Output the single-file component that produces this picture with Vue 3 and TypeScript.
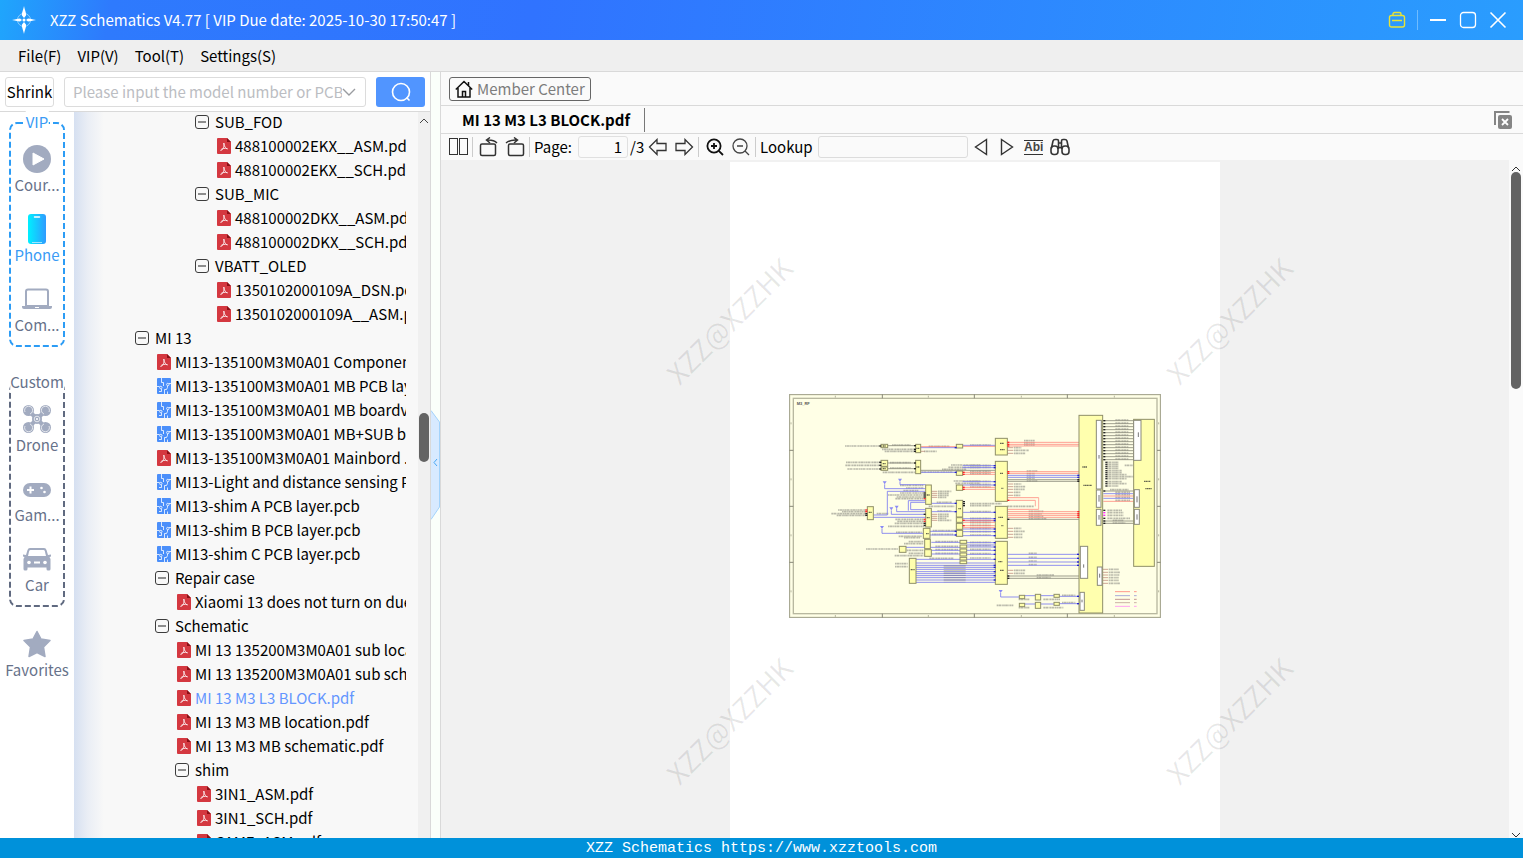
<script setup lang="ts">
import { ref } from 'vue'

type Kind = 'folder' | 'pdf' | 'pcb'
interface TreeRow { level: number; kind: Kind; name: string }

const menus: string[] = ['File(F)', 'VIP(V)', 'Tool(T)', 'Settings(S)']

const rows: TreeRow[] = [
  { level: 3, kind: 'folder', name: 'SUB_FOD' },
  { level: 4, kind: 'pdf', name: '488100002EKX__ASM.pdf' },
  { level: 4, kind: 'pdf', name: '488100002EKX__SCH.pdf' },
  { level: 3, kind: 'folder', name: 'SUB_MIC' },
  { level: 4, kind: 'pdf', name: '488100002DKX__ASM.pdf' },
  { level: 4, kind: 'pdf', name: '488100002DKX__SCH.pdf' },
  { level: 3, kind: 'folder', name: 'VBATT_OLED' },
  { level: 4, kind: 'pdf', name: '1350102000109A_DSN.pdf' },
  { level: 4, kind: 'pdf', name: '1350102000109A__ASM.pdf' },
  { level: 0, kind: 'folder', name: 'MI 13' },
  { level: 1, kind: 'pdf', name: 'MI13-135100M3M0A01 Component.pdf' },
  { level: 1, kind: 'pcb', name: 'MI13-135100M3M0A01 MB PCB layer.pcb' },
  { level: 1, kind: 'pcb', name: 'MI13-135100M3M0A01 MB boardview.pcb' },
  { level: 1, kind: 'pcb', name: 'MI13-135100M3M0A01 MB+SUB board.pcb' },
  { level: 1, kind: 'pdf', name: 'MI13-135100M3M0A01 Mainbord .pdf' },
  { level: 1, kind: 'pcb', name: 'MI13-Light and distance sensing PCB.pcb' },
  { level: 1, kind: 'pcb', name: 'MI13-shim A PCB layer.pcb' },
  { level: 1, kind: 'pcb', name: 'MI13-shim B PCB layer.pcb' },
  { level: 1, kind: 'pcb', name: 'MI13-shim C PCB layer.pcb' },
  { level: 1, kind: 'folder', name: 'Repair case' },
  { level: 2, kind: 'pdf', name: 'Xiaomi 13 does not turn on due.pdf' },
  { level: 1, kind: 'folder', name: 'Schematic' },
  { level: 2, kind: 'pdf', name: 'MI 13 135200M3M0A01 sub location.pdf' },
  { level: 2, kind: 'pdf', name: 'MI 13 135200M3M0A01 sub schematic.pdf' },
  { level: 2, kind: 'pdf', name: 'MI 13 M3 L3 BLOCK.pdf' },
  { level: 2, kind: 'pdf', name: 'MI 13 M3 MB location.pdf' },
  { level: 2, kind: 'pdf', name: 'MI 13 M3 MB schematic.pdf' },
  { level: 2, kind: 'folder', name: 'shim' },
  { level: 3, kind: 'pdf', name: '3IN1_ASM.pdf' },
  { level: 3, kind: 'pdf', name: '3IN1_SCH.pdf' },
  { level: 3, kind: 'pdf', name: 'CAME_ASM.pdf' },
]

const selected = ref<string>('MI 13 M3 L3 BLOCK.pdf')
const query = ref<string>('')
const page = ref<string>('1')
const lookup = ref<string>('')

/* ---- block diagram geometry, in sheet units ---- */
type Box = [x: number, y: number, w: number, h: number]
type Seg = [x1: number, x2: number, y: number]

const chips: Box[] = [
  [303, 178, 20, 10], [407, 178, 15, 25], [529, 178, 19, 11], [303, 226, 20, 18], [303, 246, 20, 10],
  [407, 226, 15, 40], [529, 258, 19, 13], [437, 300, 17, 58], [529, 300, 19, 16], [262, 365, 18, 39],
  [437, 370, 17, 56], [529, 346, 19, 50], [529, 398, 19, 14], [529, 415, 19, 18], [529, 436, 19, 18],
  [430, 430, 20, 30], [434, 463, 17, 28], [434, 494, 20, 20], [358, 484, 20, 18], [540, 466, 20, 9],
  [540, 480, 20, 9], [540, 492, 20, 9], [540, 504, 20, 9], [540, 517, 20, 8], [540, 528, 20, 8],
  [388, 520, 20, 75],
  [646, 160, 36, 50], [646, 229, 36, 120], [646, 364, 36, 96], [646, 469, 36, 129],
  [897, 91, 71, 593], [1061, 103, 62, 441],
  [718, 631, 16, 10], [766, 628, 16, 17], [822, 628, 16, 9],
  [718, 655, 16, 10], [766, 652, 16, 18], [822, 652, 16, 9],
]
const ports: Box[] = [
  [949, 106, 15, 206], [1061, 106, 22, 120], [949, 315, 14, 52], [949, 373, 14, 48], [1063, 314, 15, 53],
  [1063, 373, 15, 45], [901, 484, 22, 96], [952, 546, 14, 55], [900, 622, 13, 54],
]
const blue: Seg[] = [
  [422, 529, 188], [422, 529, 262], [548, 646, 181], [548, 646, 242], [548, 646, 248], [548, 646, 290],
  [548, 646, 300], [454, 529, 355], [454, 529, 380], [548, 646, 382], [548, 646, 401], [548, 646, 407],
  [280, 437, 397], [314, 437, 311], [360, 437, 299], [322, 437, 319], [334, 437, 388], [350, 437, 380],
  [385, 437, 347], [392, 437, 352], [306, 430, 445], [450, 529, 439], [450, 529, 450], [548, 646, 432],
  [548, 646, 440], [548, 646, 452], [378, 540, 487], [454, 540, 472], [454, 540, 496], [454, 540, 507],
  [560, 646, 473], [560, 646, 480], [560, 646, 486], [560, 646, 496], [560, 646, 508], [408, 646, 523],
  [408, 646, 534], [408, 646, 541], [408, 646, 547], [408, 646, 553], [408, 646, 560], [408, 646, 566],
  [408, 646, 572], [408, 646, 578], [408, 646, 585], [408, 646, 592],
  [682, 897, 271], [682, 897, 277], [682, 901, 508], [682, 901, 520], [682, 901, 531], [682, 901, 541],
  [662, 718, 636], [734, 822, 632], [838, 900, 634], [734, 822, 657], [838, 900, 656], [970, 1063, 326],
  [970, 1063, 340],
]
const red: Seg[] = [
  [422, 529, 185], [548, 646, 184], [548, 646, 262], [548, 646, 268], [548, 646, 307], [548, 646, 313],
  [548, 646, 406], [548, 646, 412], [548, 646, 422], [548, 646, 428], [682, 897, 172], [682, 897, 178],
  [682, 897, 183], [682, 897, 260], [682, 897, 265], [682, 897, 380], [682, 897, 386], [682, 897, 391],
  [682, 897, 397], [682, 776, 338], [682, 766, 346], [682, 776, 373], [970, 1063, 333], [970, 1063, 349],
]
const black: Seg[] = [
  [323, 407, 182], [323, 407, 234], [323, 407, 251], [422, 646, 256], [682, 897, 284], [682, 897, 289],
  [682, 897, 403], [682, 901, 573], [682, 901, 580], [970, 1063, 318], [970, 1063, 408], [970, 1063, 415],
  ...Array.from({ length: 14 }, (_, i): Seg => [970, 1063, 107 + i * 9]),
]
const labels: Seg[] = [
  [195, 300, 183], [336, 392, 180], [306, 405, 193], [314, 405, 199], [446, 508, 184], [432, 470, 199],
  [198, 300, 232], [196, 300, 241], [202, 300, 252], [330, 392, 233], [330, 392, 249], [308, 405, 262],
  [513, 600, 240], [505, 600, 247], [486, 560, 253], [424, 520, 261], [521, 600, 288], [526, 600, 295],
  [360, 430, 301], [378, 430, 309], [370, 416, 317], [360, 434, 324], [324, 434, 330], [350, 434, 336],
  [346, 434, 341], [474, 514, 319], [474, 506, 325], [474, 506, 331], [474, 500, 337], [470, 516, 352],
  [446, 524, 364], [174, 258, 375], [186, 258, 380], [154, 258, 386], [170, 258, 391], [290, 326, 386],
  [472, 514, 378], [474, 506, 388], [474, 506, 394], [474, 500, 400], [474, 514, 406], [346, 434, 403],
  [352, 434, 409], [344, 434, 415], [324, 434, 424], [348, 425, 442], [356, 425, 454], [372, 420, 458],
  [386, 430, 470], [372, 430, 476], [258, 354, 492], [380, 430, 496], [386, 430, 505], [344, 430, 512],
  [345, 384, 536], [345, 384, 545], [466, 534, 470], [466, 534, 484], [466, 534, 494], [466, 534, 505],
  [448, 520, 520], [458, 530, 437], [456, 520, 448], [570, 632, 180], [570, 632, 241], [570, 632, 247],
  [570, 632, 259], [570, 632, 266], [570, 632, 289], [570, 632, 298], [570, 632, 306], [570, 665, 356],
  [570, 632, 362], [570, 632, 380], [570, 632, 400], [570, 632, 407], [570, 632, 413], [570, 632, 421],
  [570, 632, 430], [570, 632, 440], [570, 632, 450], [570, 632, 472], [570, 632, 482], [570, 632, 493],
  [570, 632, 506], [570, 632, 519], [732, 764, 167], [732, 764, 174], [732, 764, 180], [702, 724, 188],
  [702, 746, 196], [702, 736, 205], [740, 772, 258], [740, 764, 266], [740, 764, 273], [740, 764, 280],
  [740, 772, 288], [702, 724, 297], [702, 736, 305], [702, 734, 313], [702, 722, 322], [702, 722, 331],
  [682, 762, 364], [746, 790, 379], [746, 786, 387], [746, 790, 394], [746, 800, 401], [702, 724, 430],
  [702, 734, 439], [702, 728, 448], [702, 728, 457], [746, 770, 505], [746, 770, 517], [746, 770, 528],
  [746, 770, 539], [702, 736, 556], [702, 734, 565], [770, 822, 570], [770, 812, 578], [846, 886, 631],
  [846, 886, 653], [716, 748, 643], [790, 840, 643], [650, 700, 661], [716, 748, 668], [790, 850, 668],
  ...Array.from({ length: 14 }, (_, i): Seg => [1006, 1046, 105 + i * 9]),
  [980, 1016, 232], [980, 1016, 238], [980, 1016, 244], [980, 1016, 250], [1034, 1058, 241],
  [980, 1026, 257], [980, 1026, 263], [980, 1040, 269], [980, 1068, 275], [980, 1040, 281],
  [980, 1026, 290], [980, 1040, 296], [980, 1016, 303], [990, 1046, 314], [1006, 1050, 322],
  [1006, 1050, 329], [1006, 1050, 337], [1006, 1050, 346], [982, 1026, 376], [982, 1030, 383],
  [982, 1030, 391], [982, 1050, 400], [998, 1030, 406], [998, 1036, 414], [986, 1016, 553],
  [986, 1020, 562], [986, 1018, 570], [986, 1016, 578], [986, 1016, 586], [986, 1020, 595],
  [911, 936, 301], [1092, 1112, 289], [1096, 1116, 311],
]
const stubs: Seg[] = [
  [422, 434, 199], [454, 472, 319], [454, 472, 325], [454, 472, 331], [454, 472, 337], [454, 472, 388],
  [454, 472, 394], [454, 472, 400], [454, 472, 406], [682, 700, 188], [682, 700, 196], [682, 700, 205],
  [682, 700, 297], [682, 700, 305], [682, 700, 313], [682, 700, 322], [682, 700, 331], [682, 700, 430],
  [682, 700, 439], [682, 700, 448], [682, 700, 457], [682, 700, 556], [682, 700, 565], [968, 984, 553],
  [968, 984, 562], [968, 984, 570], [968, 984, 578], [968, 984, 586], [968, 984, 595],
]
const pins: [x: number, y: number, color: string][] = [
  ...[182, 193, 199, 234, 251].map((y): [number, number, string] => [405, y, '#222']),
  ...[183, 232, 241, 252].map((y): [number, number, string] => [301, y, '#222']),
  ...[324, 330, 336, 388, 415, 421].map((y): [number, number, string] => [434, y, '#222']),
  ...[403, 409, 341].map((y): [number, number, string] => [434, y, '#f33']),
  ...[188, 262, 355, 380, 439, 450].map((y): [number, number, string] => [527, y, '#22c']),
  ...[262, 268, 307, 313, 406, 422].map((y): [number, number, string] => [551, y, '#f22']),
  ...[350, 356, 362].map((y): [number, number, string] => [552, y, '#222']),
  ...[242, 248, 290, 300, 382, 401, 407, 432, 440, 452, 473, 486, 496, 508, 523, 541, 547, 560, 572, 585].map((y): [number, number, string] => [644, y, '#22c']),
  ...[172, 178, 183, 260, 265, 346].map((y): [number, number, string] => [685, y, '#f22']),
  ...[380, 386, 391, 397].map((y): [number, number, string] => [895, y, '#f22']),
  ...[271, 277].map((y): [number, number, string] => [895, y, '#22c']),
  ...[284, 289].map((y): [number, number, string] => [895, y, '#222']),
  ...[508, 520, 531, 541, 634, 656].map((y): [number, number, string] => [894, y, '#22c']),
  ...[403, 573, 580].map((y): [number, number, string] => [685, y, '#222']),
  ...[375, 380].map((y): [number, number, string] => [259, y, '#f22']),
  ...[386, 391].map((y): [number, number, string] => [259, y, '#222']),
  ...Array.from({ length: 14 }, (_, i): [number, number, string] => [973, 107 + i * 9, '#222']),
  ...[232, 238, 244, 250, 257, 263, 269, 275, 281, 290, 296, 303].map((y): [number, number, string] => [979, y, '#333']),
  ...[318, 376, 400, 408, 415].map((y): [number, number, string] => [973, y, '#222']),
  ...[383, 391].map((y): [number, number, string] => [973, y, '#f2f']),
]
const power: [number, number][] = [[314, 294], [360, 286], [334, 372], [350, 367], [306, 428], [662, 620]]
const legend: [number, string][] = [[620, '#f33'], [632, '#55c'], [643, '#834'], [653, '#966'], [664, '#f4f']]
</script>

<template>
  <div class="app">
    <header class="titlebar">
      <svg class="logo" viewBox="0 0 24 28">
        <circle cx="12" cy="14" r="6.500" fill="none" stroke="#8fd0ff" stroke-width="1" />
        <path d="M12 0C13 5 14.500 7 14 9.500L12 12L10 9.500C9.500 7 11 5 12 0ZM12 28C13 23 14.500 21 14 18.500L12 16L10 18.500C9.500 21 11 23 12 28ZM0 14C4 13.500 6 12.500 8 12.500L10 14L8 15.500C6 15.500 4 14.500 0 14ZM24 14C20 13.500 18 12.500 16 12.500L14 14L16 15.500C18 15.500 20 14.500 24 14Z" fill="#fff" />
        <circle cx="12" cy="14" r="1.500" fill="#fff" />
      </svg>
      <h1 class="title">XZZ Schematics V4.77 [ VIP Due date: 2025-10-30 17:50:47 ]</h1>
      <div class="win-tools">
        <button class="win" aria-label="Toolbox">
          <svg viewBox="0 0 18 18" width="18" height="18" fill="none" stroke="#e8e337" stroke-width="1.400"><rect x="1.500" y="4.500" width="15" height="11.500" rx="2" /><path d="M5 4.500V3Q5 1.500 6.500 1.500H11.500Q13 1.500 13 3V4.500M4 9.500H14" /></svg>
        </button>
        <span class="win-sep"></span>
        <button class="win" aria-label="Minimize">
          <svg viewBox="0 0 18 18" width="18" height="18"><path d="M1 9H17" stroke="#fff" stroke-width="2" /></svg>
        </button>
        <button class="win" aria-label="Maximize">
          <svg viewBox="0 0 18 18" width="18" height="18"><rect x="1.500" y="1.500" width="15" height="15" rx="3" fill="none" stroke="#fff" stroke-width="1.300" /></svg>
        </button>
        <button class="win" aria-label="Close">
          <svg viewBox="0 0 18 18" width="18" height="18"><path d="M1.500 1.500L16.500 16.500M16.500 1.500L1.500 16.500" stroke="#fff" stroke-width="1.600" /></svg>
        </button>
      </div>
    </header>

    <nav class="menubar">
      <button v-for="m in menus" :key="m">{{ m }}</button>
    </nav>

    <main class="body">
      <section class="left">
        <form class="search" @submit.prevent>
          <button type="button" class="shrink">Shrink</button>
          <div class="combo">
            <input v-model="query" type="text" aria-label="Model number" placeholder="Please input the model number or PCB" />
            <svg viewBox="0 0 14 8" width="14" height="8"><path d="M1 1L7 7L13 1" fill="none" stroke="#9a9ca0" stroke-width="1.400" /></svg>
          </div>
          <button type="submit" class="go" aria-label="Search">
            <svg viewBox="0 0 20 20" width="20" height="20" fill="none" stroke="#fff" stroke-width="1.600"><circle cx="10" cy="10" r="8.500" /><path d="M15.500 15.500L18.500 18.500" /></svg>
          </button>
        </form>

        <div class="left-main">
          <aside class="side">
            <div class="group vip">
              <svg class="dash"><rect x="1" y="1" rx="7" /></svg>
              <span class="caption">VIP</span>
              <button class="cat">
                <svg viewBox="0 0 28 28"><circle cx="14" cy="14" r="14" fill="#a2abc0" /><path d="M10 8L21 14L10 20Z" fill="#fff" stroke="#fff" stroke-linejoin="round" /></svg>
                <span>Cour...</span>
              </button>
              <button class="cat on">
                <svg viewBox="0 0 28 30">
                  <defs><linearGradient id="phone" x1="0" x2="1"><stop offset="0" stop-color="#00f0ff" /><stop offset="1" stop-color="#2f9bff" /></linearGradient></defs>
                  <rect x="5" y="0" width="18" height="30" rx="3" fill="url(#phone)" /><path d="M11.500 3H16.500" stroke="#fff" stroke-width="1.500" stroke-linecap="round" /><path d="M9 28.500H19" stroke="#9fe6ff" />
                </svg>
                <span>Phone</span>
              </button>
              <button class="cat">
                <svg viewBox="0 0 30 30"><path d="M4 7.500Q4 5.500 6 5.500H24Q26 5.500 26 7.500V22H4Z" fill="#fff" stroke="#a2abc0" stroke-width="2" /><path d="M0 22H30V23Q30 25 28 25H2Q0 25 0 23Z" fill="#a2abc0" /><path d="M13 23.500H17" stroke="#fff" /></svg>
                <span>Com...</span>
              </button>
            </div>

            <div class="group custom">
              <svg class="dash"><rect x="1" y="1" rx="7" /></svg>
              <span class="caption">Custom</span>
              <button class="cat">
                <svg viewBox="0 0 28 28">
                  <path d="M6 6L14 14M22 6L14 14M6 22L14 14M22 22L14 14" stroke="#a2abc0" stroke-width="4" /><circle cx="14" cy="14" r="5" fill="#a2abc0" />
                  <g fill="#a2abc0"><circle cx="5.500" cy="5.500" r="5.500" /><circle cx="22.500" cy="5.500" r="5.500" /><circle cx="5.500" cy="22.500" r="5.500" /><circle cx="22.500" cy="22.500" r="5.500" /></g>
                  <g fill="none" stroke="#fff" stroke-width="0.700"><path d="M2 7A4 4 0 1 1 7 9M26 7A4 4 0 1 0 21 9M2 21A4 4 0 1 0 7 19M26 21A4 4 0 1 1 21 19" /><circle cx="14" cy="14" r="2.800" /></g>
                  <circle cx="14" cy="14" r="1.100" fill="#fff" />
                </svg>
                <span>Drone</span>
              </button>
              <button class="cat">
                <svg viewBox="0 0 28 28"><rect y="8" width="28" height="14" rx="7" fill="#a2abc0" /><path d="M7.500 11.500V18.500M4 15H11" stroke="#fff" stroke-width="2" /><circle cx="18.500" cy="13" r="1.300" fill="#fff" /><circle cx="21.500" cy="17" r="1.300" fill="#fff" /></svg>
                <span>Gam...</span>
              </button>
              <button class="cat">
                <svg viewBox="0 0 28 28"><path d="M7 3H21Q23 3 23.500 5L25 10L28 9.500V11.500L26.500 12L27.500 14V24Q27.500 25.500 26 25.500H25Q23.500 25.500 23.500 24V22.500H4.500V24Q4.500 25.500 3 25.500H2Q0.500 25.500 0.500 24V14L1.500 12L0 11.500V9.500L3 10L4.500 5Q5 3 7 3Z" fill="#a2abc0" /><path d="M7.500 5H20.500Q21.500 5 21.800 6L23 11H5L6.200 6Q6.500 5 7.500 5Z" fill="#fff" /><circle cx="6" cy="17.500" r="1.800" fill="#fff" /><circle cx="22" cy="17.500" r="1.800" fill="#fff" /><path d="M11 17.500H17" stroke="#fff" stroke-width="2" /></svg>
                <span>Car</span>
              </button>
            </div>

            <button class="cat fav">
              <svg viewBox="0 0 28 28"><path d="M14 1.500L18 9L27 10.500L20.500 17L22 26.500L14 22.500L6 26.500L7.500 17L1 10.500L10 9Z" fill="#a2abc0" stroke="#a2abc0" stroke-width="1.500" stroke-linejoin="round" /></svg>
              <span>Favorites</span>
            </button>
          </aside>

          <div class="tree-wrap">
            <ul class="tree">
              <li v-for="r in rows" :key="r.name" :style="{ paddingLeft: 61 + r.level * 20 + 'px' }">
                <button class="node" :class="{ current: r.name === selected }" @click="selected = r.name">
                  <svg v-if="r.kind === 'folder'" class="expander" viewBox="0 0 14 14"><rect x="0.500" y="0.500" width="13" height="13" rx="2.500" fill="none" stroke="#3c3c3c" /><path d="M3 7H11" stroke="#222" /></svg>
                  <svg v-else-if="r.kind === 'pdf'" class="file" viewBox="0 0 14 16"><path d="M1 0H10L14 4V15Q14 16 13 16H1Q0 16 0 15V1Q0 0 1 0Z" fill="#d43840" /><path d="M10 0L14 4H10Z" fill="#8a1016" /><path d="M6.800 5C7.200 8 7 8.500 6 10.500C5 12.300 3.500 13 3.700 12C4 11 8 9.600 10.500 10.800C9 10.800 7 8.500 6.800 5Z" fill="none" stroke="#fff" stroke-width="0.800" /></svg>
                  <svg v-else class="file" viewBox="0 0 14 16"><rect width="14" height="16" rx="1" fill="#4b8ffa" /><g fill="none" stroke="#fff" stroke-width="0.800"><path d="M4.500 0V4.500H6.500V8M0 8.500H2.500M7.500 16V11.500H9.500L10.500 9.500V8M10.500 16V13.500M14 5.500H12M2 13.500H4.500V11" /><circle cx="10.800" cy="6.500" r="1.200" /><circle cx="3.800" cy="9.500" r="1.200" /></g></svg>
                  <span>{{ r.name }}</span>
                </button>
              </li>
            </ul>
            <div class="vbar tree-bar">
              <svg viewBox="0 0 10 6" width="10" height="6"><path d="M1 5L5 1L9 5" fill="none" stroke="#444" /></svg>
              <span class="thumb"></span>
            </div>
          </div>
        </div>
      </section>

      <div class="splitter">
        <button class="handle" aria-label="Collapse panel">
          <svg viewBox="0 0 9 110" width="9" height="110"><path d="M0 0.500L8.500 12V97L0 109.500" fill="#d8eaff" stroke="#a3d3fb" /><path d="M6 49L3 52.500L6 56" fill="none" stroke="#4aa8f5" /></svg>
        </button>
      </div>

      <section class="right">
        <div class="memberbar">
          <button class="member">
            <svg viewBox="0 0 18 18" width="18" height="18" fill="none" stroke="#111" stroke-width="1.500"><path d="M0.800 9.500L9 1.500L17.200 9.500M3 8V17H15V8M7.500 17V11.500H10.500V17M13.500 2V5.500" /></svg>
            Member Center
          </button>
        </div>
        <div class="tabbar">
          <button class="tab">MI 13 M3 L3 BLOCK.pdf</button>
          <button class="close-all" aria-label="Close all tabs">
            <svg viewBox="0 0 18 18" width="18" height="18"><path d="M1 14V1H15.500" fill="none" stroke="#858585" stroke-width="2" /><rect x="4" y="4" width="14" height="14" rx="2" fill="#858585" /><path d="M8 8L14 14M14 8L8 14" stroke="#fff" stroke-width="1.800" /></svg>
          </button>
        </div>
        <div class="toolbar">
          <button class="ico panes" aria-label="Two pages">
            <svg viewBox="0 0 20 18" width="20" height="18" fill="none" stroke="#333"><rect x="0.500" y="0.500" width="8" height="16" /><rect x="10.500" y="0.500" width="8" height="16" /></svg>
          </button>
          <span class="sep"></span>
          <button class="ico rotate" aria-label="Rotate left">
            <svg viewBox="0 0 20 20" width="20" height="20" fill="none" stroke="#333" stroke-width="1.500"><rect x="1.500" y="7" width="15" height="11.500" rx="1.500" /><path d="M18 6Q14.500 2.500 8 3M11 0.500L7.500 3L11 6" /></svg>
          </button>
          <button class="ico rotate" aria-label="Rotate right">
            <svg viewBox="0 0 20 20" width="20" height="20" fill="none" stroke="#333" stroke-width="1.500"><rect x="3.500" y="7" width="15" height="11.500" rx="1.500" /><path d="M1 6Q5 2.500 12 3M9 0.500L12.500 3L9 6" /></svg>
          </button>
          <span class="sep"></span>
          <label class="lbl-page" for="page">Page:</label>
          <input id="page" v-model="page" class="page-no" type="text" />
          <span class="total">/3</span>
          <button class="ico arrow" aria-label="Previous page">
            <svg viewBox="0 0 20 18" width="20" height="18" fill="none" stroke="#333" stroke-width="1.300"><path d="M1.500 9L9 1.500V5.500H18V12.500H9V16.500Z" /></svg>
          </button>
          <button class="ico arrow" aria-label="Next page">
            <svg viewBox="0 0 20 18" width="20" height="18" fill="none" stroke="#333" stroke-width="1.300"><path d="M18.500 9L11 1.500V5.500H2V12.500H11V16.500Z" /></svg>
          </button>
          <span class="sep"></span>
          <button class="ico zoom" aria-label="Zoom in">
            <svg viewBox="0 0 18 18" width="18" height="18" fill="none" stroke="#111" stroke-width="1.800"><circle cx="8" cy="8" r="6.600" /><path d="M12.800 12.800L17 17M5 8H11M8 5V11" /></svg>
          </button>
          <button class="ico zoom" aria-label="Zoom out">
            <svg viewBox="0 0 18 18" width="18" height="18" fill="none" stroke="#444" stroke-width="1.300"><circle cx="8" cy="8" r="7" /><path d="M13 13L17 17M5 8H11" /></svg>
          </button>
          <span class="sep"></span>
          <label class="lbl-lookup" for="lookup">Lookup</label>
          <input id="lookup" v-model="lookup" class="lookup" type="text" />
          <button class="ico tri" aria-label="Find previous">
            <svg viewBox="0 0 14 18" width="14" height="18"><path d="M12.500 1.500V16.500L1.500 9Z" fill="none" stroke="#333" stroke-width="1.400" /></svg>
          </button>
          <button class="ico tri" aria-label="Find next">
            <svg viewBox="0 0 14 18" width="14" height="18"><path d="M1.500 1.500V16.500L12.500 9Z" fill="none" stroke="#333" stroke-width="1.400" /></svg>
          </button>
          <button class="ico abi">Abi</button>
          <button class="ico" aria-label="Find">
            <svg viewBox="0 0 20 18" width="20" height="18" fill="none" stroke="#333" stroke-width="1.600"><rect x="1" y="8" width="7" height="8.500" rx="3" /><rect x="12" y="8" width="7" height="8.500" rx="3" /><path d="M1.500 10L3 3Q3.500 1.500 5 1.500H7Q8.500 1.500 8.500 3V11M18.500 10L17 3Q16.500 1.500 15 1.500H13Q11.500 1.500 11.500 3V11M8.500 5H11.500M8.500 9.500H11.500" /></svg>
          </button>
        </div>

        <div class="viewer">
          <div class="canvas">
            <div class="sheet">
              <svg class="diagram" viewBox="27 27 1116 672">
                <rect x="28.500" y="28.500" width="1113" height="669" fill="#ffffe6" stroke="#aaaa94" stroke-width="4" />
                <rect x="40" y="40" width="1091" height="646" fill="none" stroke="#b8b8a0" stroke-width="4" />
                <path d="M307 28V40M583 28V40M862 28V40M307 686V698M583 686V698M862 686V698M28 196H40M28 364H40M28 532H40M1131 196H1142M1131 364H1142M1131 532H1142" stroke="#888878" stroke-width="3" />
                <path d="M166 32V38M445 32V38M724 32V38M1003 32V38M166 690V696M445 690V696M724 690V696M1003 690V696M33 112V118M33 280V286M33 448V454M33 616V622M1136 112V118M1136 280V286M1136 448V454M1136 616V622" stroke="#b8b8a0" stroke-width="3" />
                <text x="50" y="60" font-size="12" font-weight="700" fill="#555">M3_RF</text>
                <g stroke="#555" stroke-width="5" stroke-dasharray="5 1 8 1.500 3 1" opacity="0.400"><path v-for="(l, i) in labels" :key="i" :d="`M${l[0]} ${l[2]}H${l[1]}`" /></g>
                <g stroke="#7a7af0" stroke-width="2.500"><path v-for="(l, i) in blue" :key="i" :d="`M${l[0]} ${l[2]}H${l[1]}`" /></g>
                <g stroke="#ff7a70" stroke-width="2.200"><path v-for="(l, i) in red" :key="i" :d="`M${l[0]} ${l[2]}H${l[1]}`" /></g>
                <g stroke="#8a8a7c" stroke-width="2.500"><path v-for="(l, i) in black" :key="i" :d="`M${l[0]} ${l[2]}H${l[1]}`" /></g>
                <g stroke="#b5786c" stroke-width="2"><path v-for="(l, i) in stubs" :key="i" :d="`M${l[0]} ${l[2]}H${l[1]}`" /></g>
                <path d="M314 298V311M360 290V299M322 319V390H280M334 376V388M350 370V380M385 347V377M392 352V374H437M306 432V445M662 624V636" fill="none" stroke="#7a7af0" stroke-width="2.500" />
                <path d="M776 338V373M766 346V364" stroke="#ff9a90" stroke-width="2.500" />
                <path d="M524 541V592" stroke="#555" stroke-width="66" stroke-dasharray="4 3" opacity="0.300" />
                <g fill="#ffffae" stroke="#8f8f68" stroke-width="3"><rect v-for="(b, i) in chips" :key="i" :x="b[0]" :y="b[1]" :width="b[2]" :height="b[3]" /></g>
                <g fill="#fff" stroke="#8a8a7a" stroke-width="3"><rect v-for="(b, i) in ports" :key="i" :x="b[0]" :y="b[1]" :width="b[2]" :height="b[3]" /></g>
                <path d="M957 210V221M1075 142V156M957 330V350M957 390V404M1071 334V352M1071 388V404M911 538V548M959 566V578M906 644V652" stroke="#777" stroke-width="3" />
                <path d="M660 175H672M660 194H675M660 265H670M664 310H670M655 397H669M664 422H670M655 530H667M660 556H672M907 246H921M910 301H936M1092 289H1112M1096 311H1116M308 183H318M308 236H318M308 251H318M440 330H450M440 398H450M266 382H276M392 554H404M535 371H543M409 190H419M409 246H419M438 446H446" stroke="#666650" stroke-width="4" stroke-dasharray="4 1" />
                <rect v-for="(p, i) in pins" :key="i" :x="p[0] - 3" :y="p[1] - 2" width="6" height="4" :fill="p[2]" />
                <path v-for="(p, i) in power" :key="i" :d="`M${p[0] - 6} ${p[1] - 5}H${p[0] + 6}L${p[0]} ${p[1] + 4}Z`" fill="#8a8af5" />
                <g opacity="0.600"><path v-for="l in legend" :key="l[0]" :d="`M1005 ${l[0]}H1050M1062 ${l[0]}H1070`" :stroke="l[1]" stroke-width="2.500" /></g>
              </svg>
            </div>
            <div class="marks" aria-hidden="true">
              <span v-for="n in 4" :key="n">XZZ@XZZHK</span>
            </div>
          </div>
          <div class="vbar view-bar">
            <svg viewBox="0 0 10 6" width="10" height="6"><path d="M1 5L5 1L9 5" fill="none" stroke="#333" /></svg>
            <span class="thumb"></span>
            <svg class="down" viewBox="0 0 10 6" width="10" height="6"><path d="M1 1L5 5L9 1" fill="none" stroke="#333" /></svg>
          </div>
        </div>
      </section>
    </main>

    <footer class="foot">XZZ Schematics https://www.xzztools.com</footer>
  </div>
</template>

<style>
body {
  margin: 0;
}
</style>

<style scoped>
.app {
  display: flex;
  flex-direction: column;
  height: 100vh;
  overflow: hidden;
  font: 15px/24px "Noto Sans CJK SC", "Open Sans", sans-serif;
  color: #000;
  background: #fafafa;
}
.app * {
  box-sizing: border-box;
}
button {
  padding: 0;
  border: 0;
  background: none;
  font: inherit;
  color: inherit;
  white-space: nowrap;
}
input {
  font: inherit;
  color: inherit;
  min-width: 0;
  outline: 0;
}
svg {
  display: block;
  flex: none;
}

.titlebar {
  display: flex;
  flex: none;
  align-items: center;
  height: 40px;
  padding: 0 16px 0 12px;
  color: #fff;
  background: linear-gradient(100deg, #1fa6fc 0, #2e7afd 110px, #3073ff 35%, #2a9dfe 100%);
}
.logo {
  width: 24px;
  height: 28px;
}
.title {
  flex: 1;
  margin: 0 0 0 14px;
  font: inherit;
}
.win-tools {
  display: flex;
  align-items: center;
  gap: 12px;
}
.win-sep {
  width: 1px;
  height: 20px;
  margin: 0 -1px;
  background: #6fbcff;
}

.menubar {
  display: flex;
  flex: none;
  align-items: center;
  gap: 16px;
  height: 32px;
  padding: 0 18px;
  background: #efefef;
  border-bottom: 1px solid #d9d9d9;
}

.body {
  display: flex;
  flex: 1;
  min-height: 0;
}
.left {
  display: flex;
  flex: none;
  flex-direction: column;
  width: 431px;
  border-right: 1px solid #d9d9d9;
  background: #fff;
}
.search {
  display: flex;
  flex: none;
  align-items: center;
  height: 40px;
  padding: 0 5px;
  border-bottom: 1px solid #d9d9d9;
}
.shrink {
  width: 49px;
  height: 30px;
  border: 1px solid #dcdcdc;
  border-radius: 3px;
}
.combo {
  display: flex;
  flex: 1;
  align-items: center;
  height: 30px;
  margin: 0 10px;
  padding: 0 9px 0 8px;
  border: 1px solid #dcdcdc;
  border-radius: 3px;
}
.combo input {
  flex: 1;
  padding: 0;
  border: 0;
}
.combo input::placeholder {
  color: #bbbdc2;
}
.go {
  display: flex;
  align-items: center;
  justify-content: center;
  width: 49px;
  height: 30px;
  border-radius: 3px;
  background: #5195ff;
}

.left-main {
  display: flex;
  flex: 1;
  min-height: 0;
}
.side {
  flex: none;
  width: 74px;
  padding-top: 10px;
  color: #67728a;
}
.group {
  position: relative;
  display: flex;
  flex-direction: column;
  width: 56px;
  height: 225px;
  margin-left: 9px;
  padding-top: 23px;
}
.custom {
  margin-top: 35px;
}
.dash {
  position: absolute;
  inset: 0;
  width: 100%;
  height: 100%;
}
.dash rect {
  width: calc(100% - 2px);
  height: calc(100% - 2px);
  fill: none;
  stroke: #2c9cf5;
  stroke-width: 2;
  stroke-dasharray: 6 3;
}
.custom .dash rect {
  stroke: #606a80;
}
.caption {
  position: absolute;
  top: -11px;
  left: 50%;
  transform: translateX(-50%);
  line-height: 22px;
  background: #fff;
}
.vip .caption,
.cat.on {
  color: #3a9bf5;
}
.cat {
  display: flex;
  flex: none;
  flex-direction: column;
  align-items: center;
  height: 70px;
}
.cat svg {
  width: 28px;
  height: 28px;
}
.cat:nth-of-type(2) svg,
.cat:nth-of-type(3) svg {
  width: 30px;
  height: 30px;
  margin: -1px 0;
}
.custom .cat svg {
  width: 28px;
  height: 28px;
  margin: 0;
}
.fav {
  width: 74px;
  margin-top: 23px;
}

.tree-wrap {
  display: flex;
  flex: 1;
  min-width: 0;
  background: linear-gradient(90deg, #d6e0f1 0, #eaeef5 14px, #f8f8f8 30px);
}
.tree {
  flex: 1;
  min-width: 0;
  margin: -2px 12px 0 0;
  padding: 0;
  list-style: none;
  overflow: hidden;
}
.tree li {
  height: 24px;
}
.node {
  display: flex;
  align-items: center;
  height: 24px;
}
.node.current {
  color: #6496ff;
}
.expander {
  width: 14px;
  height: 14px;
  margin-right: 6px;
}
.file {
  width: 14px;
  height: 16px;
  margin: 0 4px 0 2px;
}
.vbar {
  display: flex;
  flex: none;
  flex-direction: column;
  align-items: center;
}
.thumb {
  width: 10px;
  border-radius: 5px;
  background: #636363;
}
.tree-bar {
  width: 12px;
  padding-top: 6px;
  background: #f0f0f0;
}
.tree-bar .thumb {
  height: 49px;
  margin-top: 289px;
}

.splitter {
  flex: none;
  width: 9px;
  padding-top: 338px;
  background: #fafffa;
}
.handle {
  display: block;
}

.right {
  display: flex;
  flex: 1;
  flex-direction: column;
  min-width: 0;
  border-left: 1px solid #d9d9d9;
}
.memberbar,
.tabbar {
  display: flex;
  flex: none;
  align-items: center;
  border-bottom: 1px solid #d9d9d9;
}
.memberbar {
  height: 34px;
  padding: 0 8px;
}
.member {
  display: flex;
  align-items: center;
  gap: 4px;
  height: 24px;
  padding: 0 5px;
  border: 1px solid #666;
  border-radius: 3px;
  line-height: 22px;
  color: #7d7d7d;
}
.tabbar {
  justify-content: space-between;
  height: 28px;
  padding-right: 11px;
}
.tab {
  height: 24px;
  padding: 0 14px 0 21px;
  border-right: 1px solid #777;
  font-weight: 700;
}
.toolbar {
  display: flex;
  flex: none;
  align-items: center;
  height: 26px;
  padding-left: 8px;
}
.ico {
  flex: none;
}
.panes {
  margin-right: 3px;
}
.sep {
  width: 1px;
  height: 20px;
  background: #ccc;
}
.rotate {
  margin-left: 6px;
}
.rotate + .sep {
  margin-left: 4px;
}
.lbl-page {
  width: 44px;
  margin-left: 4px;
}
.page-no {
  width: 50px;
  height: 22px;
  padding: 0 5px;
  border: 1px solid #e0e0e0;
  border-radius: 3px;
  background: transparent;
  text-align: right;
}
.total {
  width: 18px;
  padding-left: 2px;
}
.arrow {
  margin-left: 2px;
}
.arrow + .arrow {
  margin: 0 4px 0 6px;
}
.zoom {
  margin-left: 7px;
}
.zoom + .zoom {
  margin: 0 5px 0 8px;
}
.lbl-lookup {
  width: 58px;
  margin-left: 4px;
}
.lookup {
  width: 150px;
  height: 22px;
  margin-right: 6px;
  padding: 0 5px;
  border: 1px solid #dcdcdc;
  border-radius: 3px;
  background: transparent;
}
.tri + .tri {
  margin: 0 10px 0 12px;
}
.abi {
  height: 15px;
  margin-right: 7px;
  border-top: 1px solid #333;
  border-bottom: 1px solid #333;
  font: 700 12px/13px "Liberation Sans", sans-serif;
  color: #444;
}

.viewer {
  display: flex;
  flex: 1;
  min-height: 0;
}
.canvas {
  position: relative;
  display: flex;
  flex: 1;
  justify-content: center;
  min-width: 0;
  padding-top: 2px;
  overflow: hidden;
  background: #f1f1f1;
}
.sheet {
  flex: none;
  width: 490px;
  padding: 232px 59px 0;
  background: #fff;
}
.diagram {
  width: 372px;
  height: 224px;
  font-family: "Liberation Sans", sans-serif;
}
.marks {
  position: absolute;
  top: -40px;
  left: 38px;
  display: grid;
  grid-template-columns: 500px 500px;
  grid-auto-rows: 400px;
  place-items: center;
  font-size: 28px;
  color: rgba(0, 0, 0, 0.09);
}
.marks span {
  transform: rotate(-45deg);
}
.view-bar {
  width: 14px;
  padding-top: 6px;
}
.view-bar .thumb {
  height: 217px;
}
.down {
  margin-top: auto;
}

.foot {
  flex: none;
  height: 20px;
  font: 15px/22px "Liberation Mono", monospace;
  text-align: center;
  color: #fff;
  background: #0091da;
}
</style>
